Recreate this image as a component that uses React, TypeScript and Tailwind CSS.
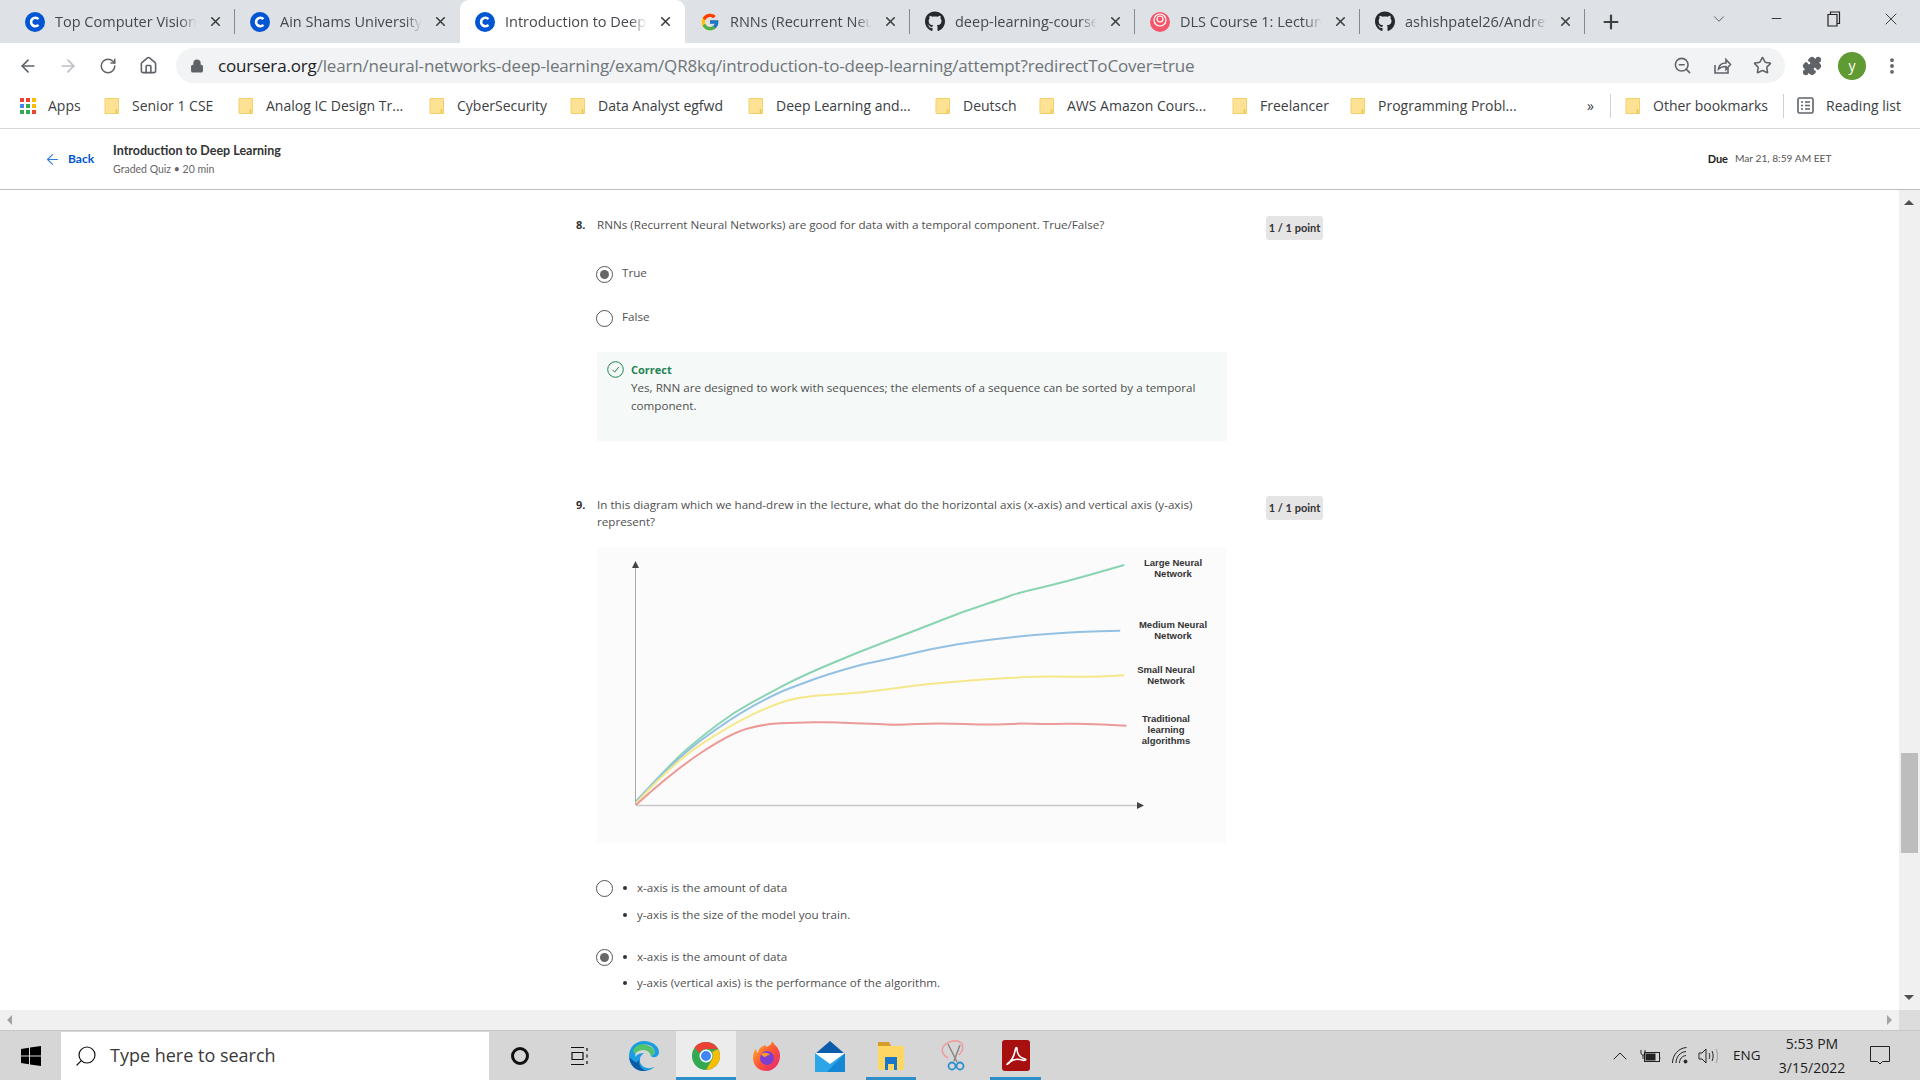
import React from 'react';
import {
  ArrowLeft,
  ArrowRight,
  ChevronDown,
  ChevronUp,
  EllipsisVertical,
  House,
  Lock,
  Minus,
  Plus,
  Puzzle,
  RotateCw,
  Search,
  Star,
  X,
  ZoomOut,
} from 'lucide-react';
import { FaGithub } from 'react-icons/fa';
import { FcGoogle } from 'react-icons/fc';

function CourseraIcon() {
  return (
    <svg width="20" height="20" viewBox="0 0 20 20">
      <circle cx="10" cy="10" r="10" fill="#0056d2" />
      <path d="M13.4 7.2A4.2 4.2 0 1 0 13.4 12.8" fill="none" stroke="#fff" strokeWidth="2.6" />
    </svg>
  );
}

function DlsIcon() {
  return (
    <svg width="20" height="20" viewBox="0 0 20 20">
      <circle cx="10" cy="10" r="10" fill="#f4566b" />
      <circle cx="10" cy="8" r="6" fill="none" stroke="#fff" strokeWidth="1.2" />
      <circle cx="10" cy="7" r="3" fill="none" stroke="#fff" strokeWidth="1.2" />
    </svg>
  );
}

const tabs = [
  { title: 'Top Computer Vision', icon: <CourseraIcon /> },
  { title: 'Ain Shams University', icon: <CourseraIcon />, hideSep: true },
  { title: 'Introduction to Deep', icon: <CourseraIcon />, active: true },
  { title: 'RNNs (Recurrent Neur', icon: <FcGoogle size={20} /> },
  { title: 'deep-learning-course', icon: <FaGithub size={21} color="#24292f" /> },
  { title: 'DLS Course 1: Lecture', icon: <DlsIcon /> },
  { title: 'ashishpatel26/Andrew', icon: <FaGithub size={21} color="#24292f" /> },
];

function Tab({ title, icon, active, hideSep }: { title: string; icon: React.ReactNode; active?: boolean; hideSep?: boolean }) {
  return (
    <div className={`relative flex h-full w-[225px] shrink-0 items-center pl-[15px] ${active ? 'rounded-t-[9px] bg-white' : ''}`}>
      <span className="flex w-[20px] justify-center">{icon}</span>
      <span className="ml-[10px] w-[142px] whitespace-nowrap text-[14.5px] text-[#45484c] [mask-image:linear-gradient(to_right,black_88%,transparent)]">
        {title}
      </span>
      <X size={15} strokeWidth={2.6} className="ml-[11px] text-[#3c4043]" />
      {!active && !hideSep && <span className="absolute right-0 top-[9px] h-[25px] w-px bg-[#85888c]" />}
    </div>
  );
}

function Folder() {
  return (
    <svg width="16" height="18" viewBox="0 0 16 18" className="shrink-0">
      <path d="M1 1.5h13.5v15H1z" fill="#fde293" stroke="#f3cf6d" strokeWidth="1" />
      <path d="M12.5 12v4.5" stroke="#eec04f" strokeWidth="1.5" />
    </svg>
  );
}

const bookmarks = [
  { name: 'Senior 1 CSE', w: 'w-[84px]' },
  { name: 'Analog IC Design Tr...', w: 'w-[141px]' },
  { name: 'CyberSecurity', w: 'w-[91px]' },
  { name: 'Data Analyst egfwd', w: 'w-[128px]' },
  { name: 'Deep Learning and...', w: 'w-[137px]' },
  { name: 'Deutsch', w: 'w-[54px]' },
  { name: 'AWS Amazon Cours...', w: 'w-[143px]' },
  { name: 'Freelancer', w: 'w-[68px]' },
  { name: 'Programming Probl...', w: 'w-[141px]' },
];

function BrowserChrome() {
  return (
    <div className="font-['Open_Sans',sans-serif]">
      <div className="flex h-[43px] items-end bg-[#dee1e6] pl-[10px]">
        {tabs.map((tab) => (
          <Tab key={tab.title} {...tab} />
        ))}
        <div className="flex h-full w-[52px] items-center justify-center">
          <Plus size={22} strokeWidth={2.4} className="text-[#3c4043]" />
        </div>
        <div className="ml-[62px] flex h-full w-[40px] items-center justify-center pb-[6px]">
          <ChevronDown size={18} strokeWidth={1} className="text-[#333]" />
        </div>
        <div className="ml-[17px] flex h-full w-[40px] items-center justify-center pb-[6px]">
          <Minus size={15} strokeWidth={1.4} className="text-[#222]" />
        </div>
        <div className="ml-[18px] flex h-full w-[40px] items-center justify-center pb-[6px]">
          <svg width="14" height="16" viewBox="0 0 14 16" fill="none" stroke="#222" strokeWidth="1.2">
            <path d="M1 3.5h9v11.5H1z" />
            <path d="M3.5 3.5V1h9v11.5H10" />
          </svg>
        </div>
        <div className="ml-[17px] flex h-full w-[40px] items-center justify-center pb-[6px]">
          <X size={20} strokeWidth={1} className="text-[#222]" />
        </div>
      </div>

      <div className="flex h-[44px] items-center bg-white pl-[8px] pr-[7px] pt-[1px]">
        <div className="flex w-[40px] justify-center"><ArrowLeft size={20} strokeWidth={2} className="text-[#5f6368]" /></div>
        <div className="flex w-[40px] justify-center"><ArrowRight size={20} strokeWidth={2} className="text-[#bcbfc3]" /></div>
        <div className="flex w-[40px] justify-center"><RotateCw size={18} strokeWidth={2} className="text-[#5f6368]" /></div>
        <div className="flex w-[40px] justify-center"><House size={19} strokeWidth={2} className="text-[#5f6368]" /></div>
        <div className="ml-[8px] flex h-[35px] w-[1609px] items-center rounded-full bg-[#f1f3f4] pl-[14px] pr-[3px]">
          <Lock size={14} strokeWidth={2.5} className="fill-[#5f6368] text-[#5f6368]" />
          <span className="ml-[14px] whitespace-nowrap text-[17px] tracking-[-0.17px] text-[#70757a]">
            <span className="text-[#202124]">coursera.org</span>
            /learn/neural-networks-deep-learning/exam/QR8kq/introduction-to-deep-learning/attempt?redirectToCover=true
          </span>
          <div className="ml-auto flex">
            <div className="flex w-[40px] justify-center"><ZoomOut size={19} className="text-[#5f6368]" /></div>
            <div className="flex w-[40px] justify-center">
              <svg width="20" height="20" viewBox="0 0 20 20" fill="none" stroke="#5f6368" strokeWidth="1.6">
                <path d="M3 9v8h13v-5" />
                <path d="M6.5 13c.5-4 3.500-6 7.500-6V3.500l4.500 5-4.500 5V10.500c-3 0-5.500.5-7.500 2.500z" />
              </svg>
            </div>
            <div className="flex w-[40px] justify-center"><Star size={19} strokeWidth={2} className="text-[#5f6368]" /></div>
          </div>
        </div>
        <div className="ml-[7px] flex w-[40px] justify-center"><Puzzle size={20} className="fill-[#5f6368] text-[#5f6368]" /></div>
        <div className="flex w-[40px] justify-center">
          <span className="flex h-[28px] w-[28px] items-center justify-center rounded-full bg-[#5f9a32] text-[14px] text-white">y</span>
        </div>
        <div className="flex w-[40px] justify-center"><EllipsisVertical size={20} strokeWidth={2.6} className="text-[#5f6368]" /></div>
      </div>

      <div className="flex h-[42px] items-center border-b border-[#d8d8d8] bg-white pb-[4px] text-[14px] text-[#3c4043]">
        <svg width="16" height="16" viewBox="0 0 16 16" className="ml-[20px] shrink-0">
          <rect x="0" y="0" width="4" height="4" fill="#ea4335" />
          <rect x="6" y="0" width="4" height="4" fill="#ea4335" />
          <rect x="12" y="0" width="4" height="4" fill="#fbbc04" />
          <rect x="0" y="6" width="4" height="4" fill="#4285f4" />
          <rect x="6" y="6" width="4" height="4" fill="#34a853" />
          <rect x="12" y="6" width="4" height="4" fill="#fbbc04" />
          <rect x="0" y="12" width="4" height="4" fill="#34a853" />
          <rect x="6" y="12" width="4" height="4" fill="#34a853" />
          <rect x="12" y="12" width="4" height="4" fill="#ea4335" />
        </svg>
        <span className="ml-[12px] w-[33px]">Apps</span>
        <div className="ml-[23px] flex gap-[22px]">
          {bookmarks.map((b) => (
            <div key={b.name} className="flex items-center gap-[12px]">
              <Folder />
              <span className={`${b.w} whitespace-nowrap`}>{b.name}</span>
            </div>
          ))}
        </div>
        <span className="ml-[68px] w-[23px] text-[14px]">»</span>
        <span className="h-[24px] w-px bg-[#d0d0d0]" />
        <div className="ml-[14px] flex items-center gap-[12px]">
          <Folder />
          <span className="w-[116px] whitespace-nowrap">Other bookmarks</span>
        </div>
        <span className="ml-[14px] h-[24px] w-px bg-[#d0d0d0]" />
        <svg width="17" height="17" viewBox="0 0 17 17" fill="none" stroke="#5f6368" strokeWidth="1.6" className="ml-[13px]">
          <rect x="1" y="1" width="15" height="15" rx="1.5" />
          <path d="M4 5h2M4 8.500h2M4 12h2M8 5h5M8 8.500h5M8 12h5" />
        </svg>
        <span className="ml-[12px] whitespace-nowrap">Reading list</span>
      </div>
    </div>
  );
}

function CourseHeader() {
  return (
    <div className="flex h-[61px] items-center border-b border-[#bdbdbd] bg-white font-['Lato',sans-serif]">
      <ArrowLeft size={17} strokeWidth={1.5} className="ml-[44px] text-[#2f7de1]" />
      <span className="ml-[7px] text-[12px] font-bold text-[#0056d2]">Back</span>
      <div className="ml-[19px] flex flex-col pt-[2px]">
        <span className="whitespace-nowrap text-[12.5px] font-bold leading-[18px] text-[#333]">Introduction to Deep Learning</span>
        <span className="whitespace-nowrap text-[10.5px] leading-[18px] text-[#666]">Graded Quiz • 20 min</span>
      </div>
      <span className="ml-auto text-[11px] font-bold text-[#222]">Due</span>
      <span className="ml-[7px] mr-[89px] w-[96px] whitespace-nowrap text-[10.2px] text-[#555]">Mar 21, 8:59 AM EET</span>
    </div>
  );
}

function Radio({ checked }: { checked?: boolean }) {
  return (
    <span className="flex h-[17px] w-[17px] shrink-0 items-center justify-center rounded-full border-[1.5px] border-[#555] bg-white">
      {checked && <span className="h-[9px] w-[9px] rounded-full bg-[#666]" />}
    </span>
  );
}

function PointBadge() {
  return (
    <span className="flex h-[24px] w-[57px] shrink-0 items-center justify-center rounded-[3px] bg-[#e5e5e5] font-['Lato',sans-serif] text-[11px] font-bold text-[#333]">
      1 / 1 point
    </span>
  );
}

// points read off the picture, in zoomed crop coordinates; corners get rounded through midpoints
const toPath = (pts: number[][]) => {
  const p = pts.map(([x, y]) => [x / 2.412 - 7.5, y / 3 - 7]);
  let d = `M${p[0][0].toFixed(1)} ${p[0][1].toFixed(1)}`;
  for (let i = 1; i < p.length - 1; i++) {
    const mx = (p[i][0] + p[i + 1][0]) / 2;
    const my = (p[i][1] + p[i + 1][1]) / 2;
    d += ` Q${p[i][0].toFixed(1)} ${p[i][1].toFixed(1)} ${mx.toFixed(1)} ${my.toFixed(1)}`;
  }
  const end = p[p.length - 1];
  return `${d} L${end[0].toFixed(1)} ${end[1].toFixed(1)}`;
};

const curves = [
  { color: '#8ad4b2', pts: [[112,785],[200,665],[270,590],[350,515],[430,462],[500,415],[650,335],[800,265],[900,215],[1000,175],[1030,160],[1150,125],[1290,75]] },
  { color: '#94c1e3', pts: [[112,785],[200,665],[340,535],[450,460],[510,432],[570,405],[660,372],[720,358],[830,325],[940,302],[1080,284],[1180,276],[1280,272]] },
  { color: '#f5e88a', pts: [[112,790],[200,670],[340,555],[450,490],[520,468],[640,460],[720,448],[800,434],[950,418],[1090,409],[1200,411],[1290,406]] },
  { color: '#ec9a98', pts: [[112,795],[200,695],[340,580],[420,552],[500,548],[580,546],[620,549],[700,552],[740,555],[840,549],[970,555],[1030,550],[1110,553],[1180,550],[1295,557]] },
];

const chartLabels = [
  { lines: ['Large Neural', 'Network'], pos: 'left-[531px] top-[10px] w-[90px]' },
  { lines: ['Medium Neural', 'Network'], pos: 'left-[531px] top-[72px] w-[90px]' },
  { lines: ['Small Neural', 'Network'], pos: 'left-[524px] top-[117px] w-[90px]' },
  { lines: ['Traditional', 'learning', 'algorithms'], pos: 'left-[524px] top-[166px] w-[90px]' },
];

function Chart() {
  return (
    <div className="relative mt-[17px] h-[296px] w-[629px] bg-[#fbfbfb]">
      <svg width="629" height="296" viewBox="0 0 629 296" className="blur-[0.4px]">
        <path d="M38.500 258V16" stroke="#aaa" strokeWidth="1" />
        <path d="M38.500 14l-3.500 7h7z" fill="#444" />
        <path d="M39 258.500H540" stroke="#c8c8c8" strokeWidth="1.5" />
        <path d="M547 258.500l-7-3.500v7z" fill="#444" />
        {curves.map((c) => (
          <path key={c.color} d={toPath(c.pts)} fill="none" stroke={c.color} strokeWidth="2" strokeLinejoin="round" />
        ))}
      </svg>
      {chartLabels.map((l) => (
        <div key={l.lines[0]} className={`absolute text-center font-['Liberation_Sans',sans-serif] text-[9.5px] font-bold leading-[11px] text-[#333] ${l.pos}`}>
          {l.lines.map((t) => <div key={t}>{t}</div>)}
        </div>
      ))}
    </div>
  );
}

function BulletLine({ text }: { text: string }) {
  return (
    <div className="flex h-[20px] items-center">
      <span className="h-[4px] w-[4px] rounded-full bg-[#333]" />
      <span className="ml-[10px]">{text}</span>
    </div>
  );
}

function QuizContent() {
  return (
    <div className="w-[747px] pt-[26px] font-['Open_Sans',sans-serif] text-[11.65px] text-[#505050]">
      <div className="flex">
        <span className="w-[21px] text-[11px] font-bold leading-[18px] text-[#333]">8.</span>
        <p className="w-[630px] leading-[18px]">RNNs (Recurrent Neural Networks) are good for data with a temporal component. True/False?</p>
        <span className="ml-auto"><PointBadge /></span>
      </div>
      <div className="ml-[20px] mt-[24px] flex h-[20px] items-center gap-[9px]">
        <Radio checked />
        <span className="-mt-[2px]">True</span>
      </div>
      <div className="ml-[20px] mt-[24px] flex h-[20px] items-center gap-[9px]">
        <Radio />
        <span className="-mt-[2px]">False</span>
      </div>
      <div className="ml-[21px] mt-[24px] flex h-[89px] w-[630px] bg-[#f5f9f7] pl-[10px] pt-[9px]">
        <svg width="17" height="17" viewBox="0 0 17 17" fill="none" stroke="#1f8354" strokeWidth="1" className="shrink-0">
          <circle cx="8.500" cy="8.500" r="7.800" />
          <path d="M5.500 8.800l2.200 2.300 4-5" />
        </svg>
        <div className="ml-[7px] w-[590px] leading-[18px]">
          <div className="text-[11px] font-bold text-[#1f8354]">Correct</div>
          Yes, RNN are designed to work with sequences; the elements of a sequence can be sorted by a temporal component.
        </div>
      </div>
      <div className="mt-[55px] flex">
        <span className="w-[21px] text-[11px] font-bold leading-[17px] text-[#333]">9.</span>
        <p className="w-[610px] leading-[17px]">
          In this diagram which we hand-drew in the lecture, what do the horizontal axis (x-axis) and vertical axis (y-axis) represent?
        </p>
        <span className="ml-auto"><PointBadge /></span>
      </div>
      <div className="ml-[21px]">
        <Chart />
        <div className="-ml-[1px] mt-[35px] flex gap-[10px]">
          <span className="mt-[2px]"><Radio /></span>
          <div>
            <BulletLine text="x-axis is the amount of data" />
            <div className="mt-[7px]"><BulletLine text="y-axis is the size of the model you train." /></div>
          </div>
        </div>
        <div className="-ml-[1px] mt-[22px] flex gap-[10px]">
          <span className="mt-[2px]"><Radio checked /></span>
          <div>
            <BulletLine text="x-axis is the amount of data" />
            <div className="mt-[6px]"><BulletLine text="y-axis (vertical axis) is the performance of the algorithm." /></div>
          </div>
        </div>
      </div>
    </div>
  );
}

function TaskIcon({ children, w, active, running }: { children: React.ReactNode; w: string; active?: boolean; running?: boolean }) {
  return (
    <div className={`relative flex h-full items-center justify-center ${w} ${active ? 'bg-[#ececec]' : ''}`}>
      {children}
      {(running || active) && <span className="absolute bottom-0 left-0 h-[3px] w-full bg-[#2e8fc9]" />}
    </div>
  );
}

function Taskbar() {
  return (
    <div className="flex h-[50px] items-center border-t border-[#c8c8c8] bg-[#d6d6d6] font-['Open_Sans',sans-serif] text-[#1c1c1c]">
      <div className="flex w-[61px] justify-center">
        <svg width="20" height="20" viewBox="0 0 20 20" fill="#000">
          <path d="M0 3l8-1.200V9.500H0zM9 1.600L20 0v9.500H9zM0 10.500h8v7.700L0 17zM9 10.500h11V20L9 18.400z" />
        </svg>
      </div>
      <div className="flex h-[48px] w-[428px] items-center bg-white pl-[13px]">
        <Search size={24} strokeWidth={1.2} className="-scale-x-100 text-[#111]" />
        <span className="ml-[12px] text-[18px] text-[#3a3a3a]">Type here to search</span>
      </div>
      <TaskIcon w="w-[61px]">
        <span className="h-[18px] w-[18px] rounded-full border-[3px] border-[#111]" />
      </TaskIcon>
      <TaskIcon w="w-[60px]">
        <svg width="20" height="20" viewBox="0 0 20 20" fill="none" stroke="#111" strokeWidth="1.2">
          <path d="M1 1.500h13M1 18.500h13M2 6.500h11v7H2zM17 2v3M17 8.500v3M17 15v3" />
        </svg>
      </TaskIcon>
      <div className="w-[4px]" />
      <TaskIcon w="w-[60px]">
        <svg width="32" height="32" viewBox="0 0 32 32">
          <path d="M16 1C7.500 1 1 7.500 1 16c0 9 6.500 15 14.500 15 4.500 0 8-1.200 11-4-4 1.800-9 1.500-12-1-4-3.300-3.500-10.500 1.500-12.500-3-.8-7 .5-9 3.500C7.500 9 12 4.500 17 4.500c5 0 9.500 3 9.500 7.500 0 2-1.500 3.500-4 3.500 1 1.500 3 2 5 1.500 2.500-.7 3.500-3 3.500-5C31 6 24 1 16 1z" fill="#1b9de2" />
          <path d="M5 11c2-5 6.500-7.500 12-6.500 4.500.8 9 3.500 9.500 7.500 0 2-1.500 3.500-4 3.500C22 10 14 8 9 12c-1.500 1.200-3 2.500-4-1z" fill="#52c46b" />
          <path d="M1.500 17c0 8 6.500 14 14 14 1 0 2 0 3-.3-5-1-8.500-6-7-11-1 .5-2 1.500-2.800 3C5 21 3 19 1.500 17z" fill="#0c59a4" />
        </svg>
      </TaskIcon>
      <div className="w-[2px]" />
      <TaskIcon w="w-[60px]" active>
        <svg width="28" height="28" viewBox="0 0 28 28">
          <circle cx="14" cy="14" r="14" fill="#34a853" />
          <path d="M14 0a14 14 0 0 1 12.100 7H14a7 7 0 0 0-6.400 4.200L2.500 5.500A14 14 0 0 1 14 0z" fill="#ea4335" />
          <path d="M26.100 7A14 14 0 0 1 14 28l6-10.500A7 7 0 0 0 20 10z" fill="#fbbc04" />
          <circle cx="14" cy="14" r="6.500" fill="#fff" />
          <circle cx="14" cy="14" r="5" fill="#4285f4" />
        </svg>
      </TaskIcon>
      <div className="w-px" />
      <TaskIcon w="w-[60px]">
        <svg width="30" height="32" viewBox="0 0 30 32">
          <defs>
            <linearGradient id="ffx" x1="0" y1="0" x2="1" y2="1">
              <stop offset="0" stopColor="#ffbd2e" />
              <stop offset="0.5" stopColor="#ff5634" />
              <stop offset="1" stopColor="#e01f7a" />
            </linearGradient>
          </defs>
          <path d="M20 1c1.500 3 6 6 7.500 11 2.500 9-4 19-13 19C6 31 1 25 1 18 1 14 2 11 4 8.500c0 2 .5 3.500 2 4.500 0-3 3-7 8-8 0 0-.5 1 0 2 3-1 6-3 6-6z" fill="url(#ffx)" />
          <circle cx="15" cy="18" r="7" fill="#7b3fd1" />
          <path d="M9 14c3-2 7-1.500 9 1-2 0-3 .5-4 1.500-1 1-3 .5-5-2.500z" fill="#ff9a2e" />
        </svg>
      </TaskIcon>
      <div className="w-[3px]" />
      <TaskIcon w="w-[60px]">
        <svg width="30" height="32" viewBox="0 0 30 32">
          <path d="M15 1L30 14H0z" fill="#0b5cab" />
          <path d="M0 13h30v19H0z" fill="#2ea5e6" />
          <path d="M30 13v19H12z" fill="#1488d4" />
          <path d="M0 13h30L15 24z" fill="#fff" />
        </svg>
      </TaskIcon>
      <div className="w-px" />
      <TaskIcon w="w-[50px] mx-[5px]" running>
        <svg width="28" height="30" viewBox="0 0 28 30">
          <path d="M1 1h11l2 4H1z" fill="#d59d2a" />
          <path d="M1 5h26v24H1z" fill="#fdd663" />
          <path d="M8 16h12v13h-3v-6h-6v6H8z" fill="#1976c9" />
        </svg>
      </TaskIcon>
      <div className="w-[2px]" />
      <TaskIcon w="w-[60px]">
        <svg width="30" height="34" viewBox="0 0 30 34" fill="none">
          <path d="M5 8c4-6 14-8 18-4 3 3 2 8-2 12" stroke="#ef9a9a" strokeWidth="1.500" />
          <path d="M5 8c-2 4 0 8 5 11" stroke="#ef9a9a" strokeWidth="1.500" />
          <path d="M10 5l9 18M22 6l-6 16" stroke="#888" strokeWidth="1.500" />
          <circle cx="14" cy="27" r="3.500" stroke="#2e8fd0" strokeWidth="1.800" />
          <circle cx="22" cy="27" r="3.500" stroke="#2e8fd0" strokeWidth="1.800" />
        </svg>
      </TaskIcon>
      <div className="w-[2px]" />
      <TaskIcon w="w-[51px] mx-[5px]" running>
        <svg width="28" height="31" viewBox="0 0 28 31">
          <rect width="28" height="31" rx="3" fill="#a80f0f" />
          <path d="M5 24c4-2 7-7 8.500-15 .4-2 1.500-2 1.500 0 0 5 3 9 8 10 2 .3 0 2-3 1-4-1.200-9-.8-12 2-2 2-4 3-2.500 2z" fill="none" stroke="#fff" strokeWidth="1.600" />
        </svg>
      </TaskIcon>

      <div className="ml-auto flex h-full items-center pr-[21px]">
        <div className="flex w-[30px] justify-center"><ChevronUp size={24} strokeWidth={1} className="text-[#222]" /></div>
        <div className="flex w-[30px] justify-center">
          <svg width="21" height="14" viewBox="0 0 21 14" fill="none" stroke="#222" strokeWidth="1">
            <rect x="4.500" y="3.500" width="15" height="9" />
            <rect x="6" y="5" width="9" height="6" fill="#222" />
            <path d="M19.500 6v3h1" />
            <path d="M1 1v3c0 1.500 1 2 2 2s2-.5 2-2V1M3 6v4" />
          </svg>
        </div>
        <div className="flex w-[30px] justify-center">
          <svg width="17" height="17" viewBox="0 0 17 17" fill="none" stroke="#222" strokeWidth="1">
            <path d="M.5 16c0-8 6-15 14-15.500M4 16c0-6 4-11 10-11.500M7.500 16c0-4 2.500-7 6.500-7.500" />
            <circle cx="13.500" cy="14.500" r="1.500" fill="#222" />
          </svg>
        </div>
        <div className="flex w-[26px] justify-center">
          <svg width="21" height="16" viewBox="0 0 21 16" fill="none" stroke="#222" strokeWidth="1">
            <path d="M1 5h3l4-4v14l-4-4H1z" />
            <path d="M11 5c1 2 1 4 0 6M14 3c1.500 3 1.500 7 0 10" />
            <path d="M18 1c2 4 2 10 0 14" stroke="#999" />
          </svg>
        </div>
        <span className="ml-[12px] w-[30px] text-[13.5px]">ENG</span>
        <div className="flex w-[98px] flex-col items-center text-[14px] leading-[24px]">
          <span>5:53 PM</span>
          <span>3/15/2022</span>
        </div>
        <div className="flex w-[38px] justify-center">
          <svg width="20" height="19" viewBox="0 0 20 19" fill="none" stroke="#222" strokeWidth="1">
            <path d="M.5.500h19v15h-7l-2.500 2.500L7.500 15.500h-7z" />
          </svg>
        </div>
      </div>
    </div>
  );
}

export default function App() {
  return (
    <div className="flex h-screen w-screen flex-col overflow-hidden bg-white">
      <BrowserChrome />
      <CourseHeader />
      <div className="flex min-h-0 flex-1">
        <main className="min-w-0 flex-1 overflow-hidden pl-[576px]">
          <QuizContent />
        </main>
        <div className="relative w-[21px] bg-[#f0f0f0]">
          <span className="absolute left-[5px] top-[10px] h-0 w-0 border-x-[5px] border-b-[5px] border-x-transparent border-b-[#505050]" />
          <span className="absolute left-[2px] top-[563px] h-[100px] w-[17px] bg-[#bdbdbd]" />
          <span className="absolute bottom-[10px] left-[5px] h-0 w-0 border-x-[5px] border-t-[5px] border-x-transparent border-t-[#505050]" />
        </div>
      </div>
      <div className="flex h-[20px] shrink-0">
        <div className="flex flex-1 items-center justify-between bg-[#f0f0f0] px-[7px]">
          <span className="h-0 w-0 border-y-[5px] border-r-[5px] border-y-transparent border-r-[#a3a3a3]" />
          <span className="h-0 w-0 border-y-[5px] border-l-[5px] border-y-transparent border-l-[#a3a3a3]" />
        </div>
        <div className="w-[21px] bg-[#dcdcdc]" />
      </div>
      <Taskbar />
    </div>
  );
}
